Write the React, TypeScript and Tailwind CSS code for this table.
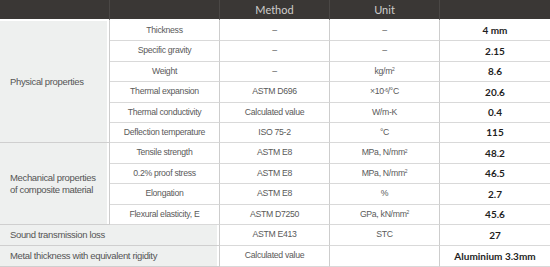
import React from "react";

type Row = { prop: string; method: React.ReactNode; unit: React.ReactNode; value: string };

const physical: Row[] = [
  { prop: "Thickness", method: "–", unit: "–", value: "4 mm" },
  { prop: "Specific gravity", method: "–", unit: "–", value: "2.15" },
  { prop: "Weight", method: "–", unit: <>kg/m<sup className="text-[5px]">2</sup></>, value: "8.6" },
  { prop: "Thermal expansion", method: "ASTM D696", unit: <>×10<sup className="text-[5px]">-6</sup>/°C</>, value: "20.6" },
  { prop: "Thermal conductivity", method: "Calculated value", unit: "W/m-K", value: "0.4" },
  { prop: "Deflection temperature", method: "ISO 75-2", unit: "°C", value: "115" },
];

const mechanical: Row[] = [
  { prop: "Tensile strength", method: "ASTM E8", unit: <>MPa, N/mm<sup className="text-[5px]">2</sup></>, value: "48.2" },
  { prop: "0.2% proof stress", method: "ASTM E8", unit: <>MPa, N/mm<sup className="text-[5px]">2</sup></>, value: "46.5" },
  { prop: "Elongation", method: "ASTM E8", unit: "%", value: "2.7" },
  { prop: "Flexural elasticity, E", method: "ASTM D7250", unit: <>GPa, kN/mm<sup className="text-[5px]">2</sup></>, value: "45.6" },
];

const head = "bg-[#3a3735] border-b-2 border-b-white flex items-center justify-center pt-px text-[11px] text-[#cfcdcb] font-['Lato',sans-serif]";
const cell =
  "flex items-center justify-center border-b border-b-[#d9d9d9] border-r border-r-[#cdcdcd] text-[8.7px] tracking-[-0.3px] text-[#5a5a5a] font-['Liberation_Sans',Arial,sans-serif]";
const group =
  "flex items-center pl-[10px] bg-[#eef0ef] shadow-[inset_-2px_0_0_#fff] border-b border-b-[#cfcfcf] border-r border-r-[#cdcdcd] text-[9.5px] leading-[12px] tracking-[-0.35px] text-[#555] font-['Liberation_Sans',Arial,sans-serif]";
const val =
  "flex items-center justify-center border-b border-b-[#d9d9d9] text-[10px] font-bold text-[#1e1e1e] font-['Lato',sans-serif]";

function Cells({ r }: { r: Row }) {
  return (
    <>
      <div className={cell}>{r.prop}</div>
      <div className={cell}>{r.method}</div>
      <div className={cell}>{r.unit}</div>
      <div className={val}>{r.value}</div>
    </>
  );
}

export default function App() {
  return (
    <div className="w-[550px] h-[267px] bg-white overflow-hidden">
      <div className="grid grid-cols-[110px_110px_110px_110px_110px] grid-rows-[21px_20px_21px_20px_21px_20px_20px_21px_20px_21px_20px_21px_21px]">
        <div className={`${head} border-r border-r-[#4a4745]`} />
        <div className={`${head} border-r border-r-[#4a4745]`} />
        <div className={`${head} border-r border-r-[#4a4745]`}>Method</div>
        <div className={`${head} border-r border-r-[#4a4745]`}>Unit</div>
        <div className={head} />

        <div className={`${group} col-start-1 row-start-2 row-end-8`}>Physical properties</div>
        {physical.map((r) => (
          <Cells key={r.prop} r={r} />
        ))}

        <div className={`${group} col-start-1 row-start-8 row-end-12`}>
          <p>
            Mechanical properties
            <br />
            of composite material
          </p>
        </div>
        {mechanical.map((r) => (
          <Cells key={r.prop} r={r} />
        ))}

        <div className={`${group} col-span-2`}>Sound transmission loss</div>
        <div className={cell}>ASTM E413</div>
        <div className={cell}>STC</div>
        <div className={val}>27</div>

        <div className={`${group} col-span-2`}>Metal thickness with equivalent rigidity</div>
        <div className={cell}>Calculated value</div>
        <div className={cell} />
        <div className={val}>Aluminium 3.3mm</div>
      </div>
    </div>
  );
}
